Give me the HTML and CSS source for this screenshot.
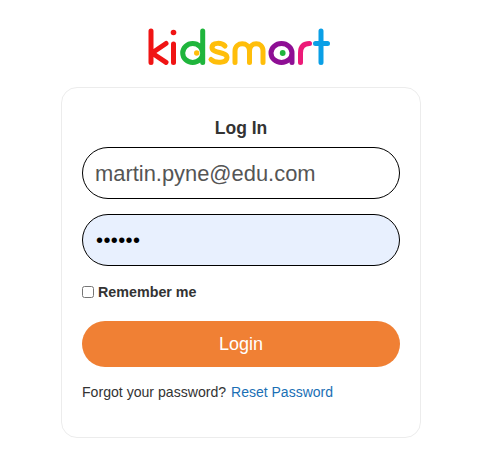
FILE: index.html
```html
<!DOCTYPE html>
<html lang="en">

<head>
    <meta charset="UTF-8">
    <meta name="viewport" content="width=device-width, initial-scale=1.0">
    <title>Log In</title>
    <link rel="stylesheet" href="styles.css">
</head>

<body>
    <div class="main-container">

        <svg class="logo" viewBox="0 0 186 42" width="186" height="42" role="img" aria-label="kidsmart">
            <g fill="none" stroke-width="5" stroke-linecap="round" stroke-linejoin="round">
                <path stroke="#f01414" d="M3 6V37.400M18 18.500L4 28L18 37.400" />
                <path stroke="#f01414" d="M25.500 19V37.400" />
                <path stroke="#1fb53c" d="M54.700 6V37.400M54.700 28A10 9.400 0 1 1 34.700 28A10 9.400 0 1 1 54.700 28" />
                <path stroke="#ffbe0a" d="M77 21C74 17.500 64 17 64 22.500C64 29 79 26 79 32.500C79 38.500 67 38.500 63 34.500" />
                <path stroke="#ffbe0a" d="M87 37.400V26C87 16.400 101.500 16.400 101.500 26V37.400M101.500 26C101.500 16.400 115 16.400 115 26V37.400" />
                <path stroke="#8e0f94" d="M144 28A10.500 9.400 0 1 1 123 28A10.500 9.400 0 1 1 144 28V37.400" />
                <path stroke="#ec1a78" d="M152.500 37.400V28C152.500 21 156 18.600 161.500 18.600" />
                <path stroke="#0a9fe6" d="M173 6V37.400M167.500 18.600H179.500" />
            </g>
            <circle cx="25.500" cy="7.500" r="2.800" fill="#f01414" />
            <circle cx="48.700" cy="28" r="2.700" fill="#ffbe0a" />
            <circle cx="134.700" cy="28" r="2.900" fill="#1fb53c" />
        </svg>

        <div class="login-card">
            <form id="form">
                <h1 class="login-title">Log In</h1>

                <input class="login-input" name="email" type="text" value="martin.pyne@edu.com">
                <input class="login-input password-input" name="password" type="password" value="secret">

                <label class="remember-row">
                    <input type="checkbox" name="remember">
                    <span>Remember me</span>
                </label>

                <button class="login-btn" type="submit">Login</button>

                <p class="forgot-row">Forgot your password? <a href="#">Reset Password</a></p>
            </form>
        </div>
    </div>
</body>

</html>
```

FILE: styles.css
```css
body {
    margin: 0;
    background-color: #ffffff;
    font-family: "Liberation Sans", Arial, sans-serif;
    color: #333333;
}

.main-container {
    display: flex;
    flex-direction: column;
    align-items: center;
    width: 482px;
    padding-top: 25px;
}

.logo {
    display: block;
    margin-bottom: 20px;
}

.login-card {
    width: 360px;
    height: 351px;
    box-sizing: border-box;
    padding: 30px 20px 0;
    background-color: white;
    border: 1px solid #ececec;
    border-radius: 16px;
}

.login-title {
    margin: 0 0 9px;
    font-size: 17.500px;
    line-height: 20px;
    font-weight: bold;
    text-align: center;
}

.login-input {
    display: block;
    width: 100%;
    height: 52px;
    box-sizing: border-box;
    margin-bottom: 15px;
    padding: 2px 12px 0;
    border: 1px solid black;
    border-radius: 26px;
    background-color: white;
    font-family: inherit;
    font-size: 21.900px;
    color: #555555;
}

.password-input {
    margin-bottom: 0;
    padding: 0 13px;
    background-color: #e8f0fe;
    font-size: 20px;
    letter-spacing: 0.400px;
    color: black;
}

.remember-row {
    display: flex;
    align-items: center;
    gap: 4px;
    margin-top: 18px;
    font-size: 14.300px;
    line-height: 16px;
    font-weight: bold;
}

.remember-row input {
    width: 12px;
    height: 12px;
    margin: 0;
}

.login-btn {
    display: block;
    width: 100%;
    height: 46px;
    margin-top: 21px;
    border: none;
    border-radius: 23px;
    background-color: #f08034;
    color: white;
    font-family: inherit;
    font-size: 18px;
    cursor: pointer;
}

.forgot-row {
    margin: 17px 0 0;
    font-size: 14.100px;
    line-height: 16px;
}

.forgot-row a {
    margin-left: 1px;
    font-size: 14px;
    color: #1a6fb5;
    text-decoration: none;
}
```
